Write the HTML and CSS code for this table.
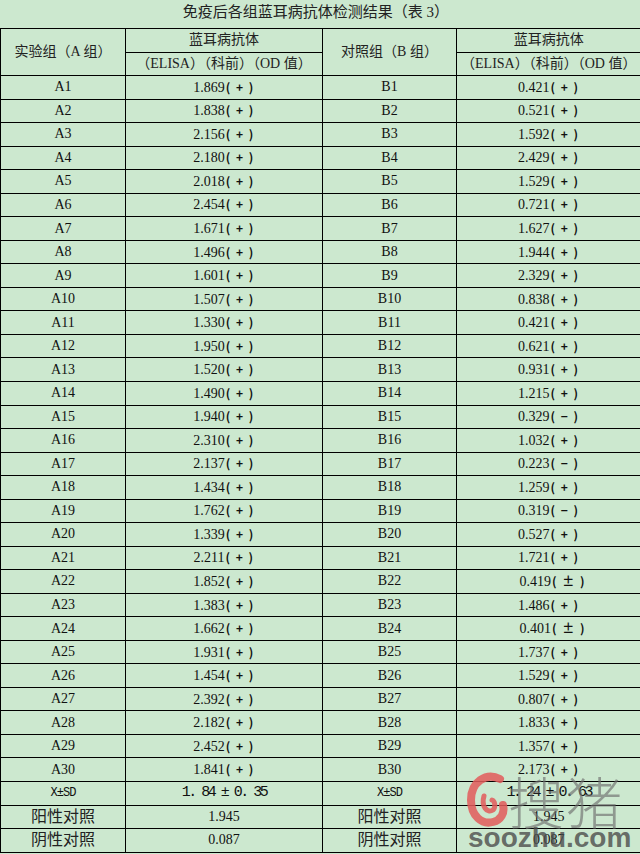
FILE: index.html
```html
<!DOCTYPE html>
<html lang="zh-CN">
<head>
<meta charset="utf-8">
<title>免疫后各组蓝耳病抗体检测结果（表 3）</title>
<link rel="stylesheet" href="styles.css">
</head>
<body>
<div class="page">
  <div class="title">免疫后各组蓝耳病抗体检测结果（表 3）</div>
  <table class="grid">
    <colgroup>
      <col class="c1"><col class="c2"><col class="c3"><col class="c4">
    </colgroup>
    <thead>
      <tr>
        <th rowspan="2" class="cn">实验组（A 组）</th>
        <th class="cn">蓝耳病抗体</th>
        <th rowspan="2" class="cn">对照组（B 组）</th>
        <th class="cn">蓝耳病抗体</th>
      </tr>
      <tr>
        <th class="cn">（ELISA）（科前）（OD 值）</th>
        <th class="cn">（ELISA）（科前）（OD 值）</th>
      </tr>
    </thead>
    <tbody>
      <tr><td>A1</td><td>1.869<span class="s">( + )</span></td><td>B1</td><td>0.421<span class="s">( + )</span></td></tr>
      <tr><td>A2</td><td>1.838<span class="s">( + )</span></td><td>B2</td><td>0.521<span class="s">( + )</span></td></tr>
      <tr><td>A3</td><td>2.156<span class="s">( + )</span></td><td>B3</td><td>1.592<span class="s">( + )</span></td></tr>
      <tr><td>A4</td><td>2.180<span class="s">( + )</span></td><td>B4</td><td>2.429<span class="s">( + )</span></td></tr>
      <tr><td>A5</td><td>2.018<span class="s">( + )</span></td><td>B5</td><td>1.529<span class="s">( + )</span></td></tr>
      <tr><td>A6</td><td>2.454<span class="s">( + )</span></td><td>B6</td><td>0.721<span class="s">( + )</span></td></tr>
      <tr><td>A7</td><td>1.671<span class="s">( + )</span></td><td>B7</td><td>1.627<span class="s">( + )</span></td></tr>
      <tr><td>A8</td><td>1.496<span class="s">( + )</span></td><td>B8</td><td>1.944<span class="s">( + )</span></td></tr>
      <tr><td>A9</td><td>1.601<span class="s">( + )</span></td><td>B9</td><td>2.329<span class="s">( + )</span></td></tr>
      <tr><td>A10</td><td>1.507<span class="s">( + )</span></td><td>B10</td><td>0.838<span class="s">( + )</span></td></tr>
      <tr><td>A11</td><td>1.330<span class="s">( + )</span></td><td>B11</td><td>0.421<span class="s">( + )</span></td></tr>
      <tr><td>A12</td><td>1.950<span class="s">( + )</span></td><td>B12</td><td>0.621<span class="s">( + )</span></td></tr>
      <tr><td>A13</td><td>1.520<span class="s">( + )</span></td><td>B13</td><td>0.931<span class="s">( + )</span></td></tr>
      <tr><td>A14</td><td>1.490<span class="s">( + )</span></td><td>B14</td><td>1.215<span class="s">( + )</span></td></tr>
      <tr><td>A15</td><td>1.940<span class="s">( + )</span></td><td>B15</td><td>0.329<span class="s">( − )</span></td></tr>
      <tr><td>A16</td><td>2.310<span class="s">( + )</span></td><td>B16</td><td>1.032<span class="s">( + )</span></td></tr>
      <tr><td>A17</td><td>2.137<span class="s">( + )</span></td><td>B17</td><td>0.223<span class="s">( − )</span></td></tr>
      <tr><td>A18</td><td>1.434<span class="s">( + )</span></td><td>B18</td><td>1.259<span class="s">( + )</span></td></tr>
      <tr><td>A19</td><td>1.762<span class="s">( + )</span></td><td>B19</td><td>0.319<span class="s">( − )</span></td></tr>
      <tr><td>A20</td><td>1.339<span class="s">( + )</span></td><td>B20</td><td>0.527<span class="s">( + )</span></td></tr>
      <tr><td>A21</td><td>2.211<span class="s">( + )</span></td><td>B21</td><td>1.721<span class="s">( + )</span></td></tr>
      <tr><td>A22</td><td>1.852<span class="s">( + )</span></td><td>B22</td><td class="pm">0.419<span class="s">( ± )</span></td></tr>
      <tr><td>A23</td><td>1.383<span class="s">( + )</span></td><td>B23</td><td>1.486<span class="s">( + )</span></td></tr>
      <tr><td>A24</td><td>1.662<span class="s">( + )</span></td><td>B24</td><td class="pm">0.401<span class="s">( ± )</span></td></tr>
      <tr><td>A25</td><td>1.931<span class="s">( + )</span></td><td>B25</td><td>1.737<span class="s">( + )</span></td></tr>
      <tr><td>A26</td><td>1.454<span class="s">( + )</span></td><td>B26</td><td>1.529<span class="s">( + )</span></td></tr>
      <tr><td>A27</td><td>2.392<span class="s">( + )</span></td><td>B27</td><td>0.807<span class="s">( + )</span></td></tr>
      <tr><td>A28</td><td>2.182<span class="s">( + )</span></td><td>B28</td><td>1.833<span class="s">( + )</span></td></tr>
      <tr><td>A29</td><td>2.452<span class="s">( + )</span></td><td>B29</td><td>1.357<span class="s">( + )</span></td></tr>
      <tr><td>A30</td><td>1.841<span class="s">( + )</span></td><td>B30</td><td>2.173<span class="s">( + )</span></td></tr>
      <tr><td class="mono sm">X±SD</td><td class="mono">1. 84 ± 0. 35</td><td class="mono sm">X±SD</td><td class="mono">1. 24 ± 0. 63</td></tr>
      <tr><td class="cn big">阳性对照</td><td>1.945</td><td class="cn big">阳性对照</td><td>1.945</td></tr>
      <tr><td class="cn big">阴性对照</td><td>0.087</td><td class="cn big">阴性对照</td><td>0.087</td></tr>
    </tbody>
  </table>

  <div class="watermark" aria-hidden="true">
    <svg class="wm-logo" width="42" height="58" viewBox="0 0 42 58">
      <path d="M34 9 C20 2 5 12 5 30 C5 46 16 55 27 52 C35 50 39 43 37 35" fill="none" stroke="#e25b5b" stroke-width="8" stroke-linecap="round" opacity="0.85"/>
      <path d="M18 26 C15 36 21 44 27 40 C30 37 29 31 26 30" fill="none" stroke="#e25b5b" stroke-width="5" stroke-linecap="round" opacity="0.85"/>
    </svg>
    <div class="wm-cn">搜猪</div>
    <div class="wm-en">soozhu.com</div>
  </div>
</div>
</body>
</html>
```
FILE: styles.css
```css
html, body {
  margin: 0;
  padding: 0;
}
body {
  background: #cce8cf;
  width: 640px;
  height: 854px;
  overflow: hidden;
  font-family: "Liberation Serif", "Noto Sans CJK SC", serif;
  color: #111;
}
.page {
  position: relative;
  width: 640px;
  height: 854px;
}
.title {
  height: 28px;
  line-height: 25px;
  text-align: center;
  font-family: "Liberation Serif", "Noto Sans CJK SC", sans-serif;
  font-size: 15px;
  color: #222;
  padding-right: 8px;
}
.grid {
  width: 640px;
  table-layout: fixed;
  border-collapse: collapse;
}
.c1 { width: 125px; }
.c2 { width: 197px; }
.c3 { width: 134px; }
.c4 { width: 184px; }
.grid th, .grid td {
  border: 1px solid #000;
  padding: 0;
  height: 22.54px;
  text-align: center;
  vertical-align: middle;
  font-weight: normal;
  font-size: 14px;
  line-height: 16px;
  white-space: nowrap;
}
.grid th:last-child, .grid td:last-child {
  border-right: 0;
}
.cn {
  font-family: "Liberation Serif", "Noto Sans CJK SC", sans-serif;
  font-size: 14px;
  color: #222;
}
.s {
  font-family: "Noto Sans CJK SC", sans-serif;
  font-weight: bold;
  font-size: 12px;
  letter-spacing: 1.5px;
  margin-left: 1px;
}
.grid td.pm {
  padding-left: 8px;
}
.grid td.mono {
  font-family: "Liberation Mono", monospace;
  font-size: 15px;
  letter-spacing: -2.5px;
}
.grid td.mono.sm {
  font-size: 12px;
  letter-spacing: -1px;
}
.grid td.big {
  font-size: 16px;
}
.watermark {
  position: absolute;
  left: 466px;
  top: 770px;
  width: 172px;
  height: 82px;
  pointer-events: none;
}
.wm-logo {
  position: absolute;
  left: 0;
  top: 0;
}
.wm-cn {
  position: absolute;
  left: 42px;
  top: 0;
  font-family: "Noto Sans CJK SC", sans-serif;
  font-size: 56px;
  line-height: 60px;
  font-weight: 300;
  letter-spacing: 2px;
  color: rgba(110, 110, 110, 0.65);
}
.wm-en {
  position: absolute;
  left: 2px;
  top: 53px;
  font-family: "Liberation Sans", sans-serif;
  font-weight: bold;
  font-size: 28px;
  line-height: 30px;
  color: rgba(75, 75, 75, 0.8);
}
```
